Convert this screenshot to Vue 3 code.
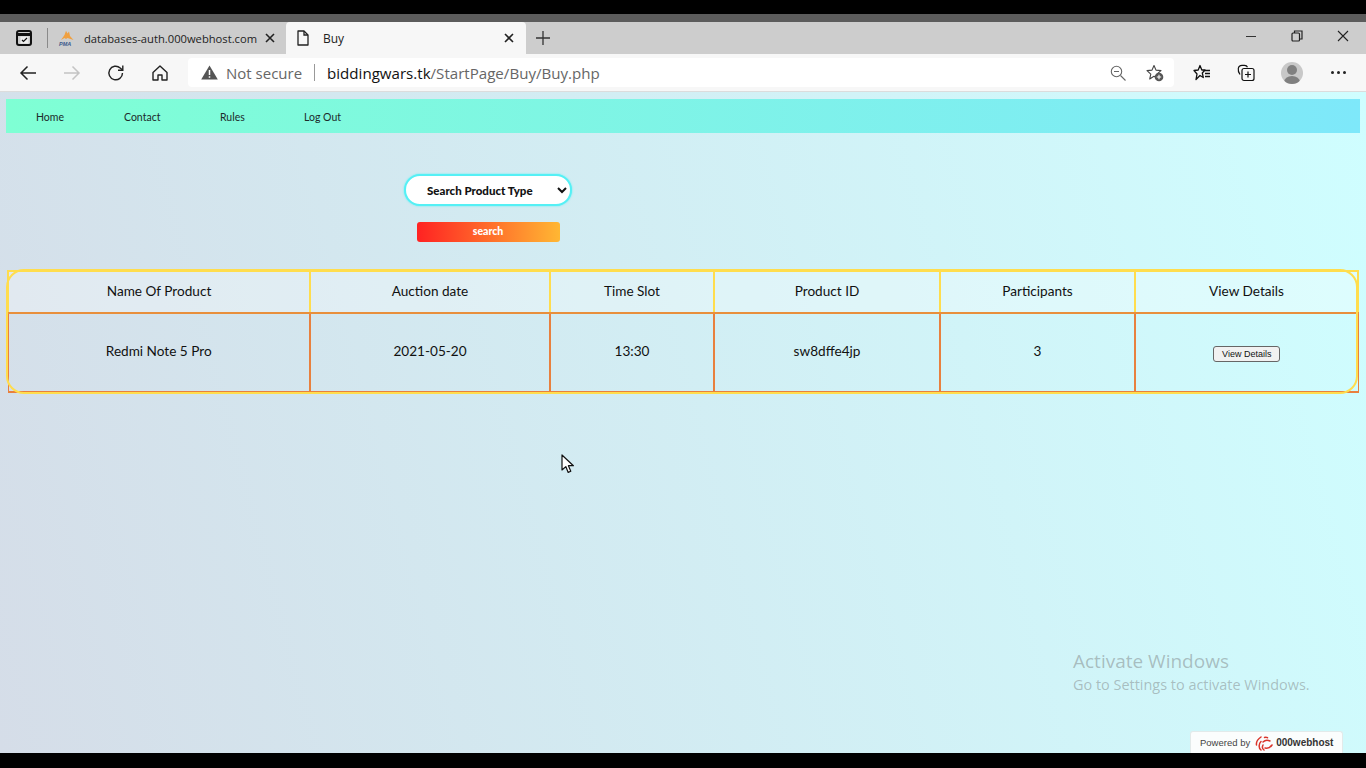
<template>
  <div class="screen">
    <div class="black-top"></div>
    <div class="tabstrip">
      <svg class="tab-actions" width="18" height="18" viewBox="0 0 18 18" fill="none" stroke="#111" stroke-width="2">
        <rect x="2" y="2" width="14" height="14" rx="2" />
        <path d="M2 5.500h14" stroke-width="3" />
        <rect x="5.500" y="7.500" width="8" height="7" fill="#eee" stroke="none" />
        <path d="M7 11l1.500 1.500L12 9" stroke-width="1.200" />
      </svg>
      <span class="tab-sep"></span>
      <div class="tab">
        <svg class="pma" width="18" height="16" viewBox="0 0 18 16">
          <path d="M3 10L6.500 5 8 .8 9.500 3.500 11 1.500 12 6l3.500 4-6-2-1.500 1-1.500-1z" fill="#f0a040" />
          <text x="1" y="15.500" font-size="5.500" font-weight="700" font-style="italic" fill="#3a5a8c" font-family="Liberation Sans, sans-serif">PMA</text>
        </svg>
        <span class="tab-title fade">databases-auth.000webhost.com</span>
        <svg class="tab-close" width="10" height="10" viewBox="0 0 10 10" stroke="#222" stroke-width="1.600"><path d="M1 1l8 8M9 1l-8 8" /></svg>
      </div>
      <div class="tab active">
        <svg class="doc" width="14" height="16" viewBox="0 0 14 16" fill="none" stroke="#222" stroke-width="1.300">
          <path d="M2 1h6l4 4v10H2z" stroke-linejoin="round" />
          <path d="M8 1v4h4" />
        </svg>
        <span class="tab-title">Buy</span>
        <svg class="tab-close" width="10" height="10" viewBox="0 0 10 10" stroke="#222" stroke-width="1.600"><path d="M1 1l8 8M9 1l-8 8" /></svg>
      </div>
      <svg class="new-tab" width="16" height="16" viewBox="0 0 16 16" stroke="#333" stroke-width="1.300"><path d="M8 1v14M1 8h14" /></svg>
      <div class="win-controls">
        <svg width="12" height="12" viewBox="0 0 12 12" stroke="#333"><path d="M1 6.500h10" /></svg>
        <svg width="12" height="12" viewBox="0 0 12 12" fill="none" stroke="#222" stroke-width="1.200">
          <rect x="1" y="3" width="7.500" height="8" rx="1" />
          <path d="M3.500 3V1h7.500v8H8.500" />
        </svg>
        <svg width="12" height="12" viewBox="0 0 12 12" stroke="#222" stroke-width="1.100"><path d="M1 1l10 10M11 1L1 11" /></svg>
      </div>
    </div>

    <div class="toolbar">
      <svg class="nav-icon back" width="18" height="16" viewBox="0 0 18 16" fill="none" stroke="#222" stroke-width="1.500"><path d="M17 8H2M8.500 1.500L2 8l6.500 6.500" /></svg>
      <svg class="nav-icon forward" width="18" height="16" viewBox="0 0 18 16" fill="none" stroke="#c4c4c4" stroke-width="1.500"><path d="M1 8h15M9.500 1.500L16 8l-6.500 6.500" /></svg>
      <svg class="nav-icon reload" width="18" height="18" viewBox="0 0 18 18" fill="none" stroke="#222" stroke-width="1.400">
        <path d="M15.500 9a6.800 6.800 0 1 1-2.300-5.100L15.500 6" />
        <path d="M15.800 1.500V6.200H11" />
      </svg>
      <svg class="nav-icon home" width="18" height="18" viewBox="0 0 18 18" fill="none" stroke="#222" stroke-width="1.400" stroke-linejoin="round">
        <path d="M2 8.500L9 2l7 6.500V16h-5v-5H7v5H2z" />
      </svg>
      <div class="address">
        <svg width="17" height="15" viewBox="0 0 17 15"><path d="M8.500 0.500L16.800 14.500H0.200z" fill="#555" /><path d="M8.500 5v5M8.500 11.200v1.500" stroke="#fff" stroke-width="1.500" /></svg>
        <span class="not-secure">Not secure</span>
        <span class="addr-sep"></span>
        <span class="url"><b>biddingwars.tk</b>/StartPage/Buy/Buy.php</span>
        <svg class="zoom-out" width="16" height="16" viewBox="0 0 16 16" fill="none" stroke="#666" stroke-width="1.100">
          <circle cx="6.500" cy="6.500" r="5.200" />
          <path d="M4 6.500h5M10.500 10.500l5 5" />
        </svg>
        <svg class="fav-add" width="18" height="18" viewBox="0 0 18 18">
          <path d="M8 1.500l2 4.600 5 .5-3.800 3.300 1.100 4.900L8 12.300 3.700 15l1.100-4.900L1 6.600l5-.5z" fill="none" stroke="#444" stroke-width="1.100" stroke-linejoin="round" />
          <circle cx="13" cy="13" r="4.300" fill="#555" />
          <path d="M13 10.800v4.400M10.800 13h4.400" stroke="#fff" stroke-width="1.100" />
        </svg>
      </div>
      <svg class="tool-icon fav" width="18" height="18" viewBox="0 0 18 18" fill="none" stroke="#111" stroke-width="1.300" stroke-linejoin="round">
        <path d="M7 1.500L8.800 6H12L9.300 9l1 4.500L7 11.500 3 15.500l1-5.500L1 6.500 5.200 6z" />
        <path d="M11.500 6.500H17M12 9.500h5M12 12.500h5" />
      </svg>
      <svg class="tool-icon coll" width="18" height="18" viewBox="0 0 18 18" fill="none" stroke="#111" stroke-width="1.200">
        <path d="M3 10.500C1.500 8.500 1 6.500 1.300 4.500 1.600 2.500 3 1.300 5 1.300h2.500c1.500 0 2.500.7 3 2" />
        <rect x="5" y="4.500" width="12" height="12" rx="2" />
        <path d="M11 7.500v6M8 10.500h6" />
      </svg>
      <div class="avatar">
        <span class="avatar-head"></span>
        <span class="avatar-body"></span>
      </div>
      <div class="more"><i></i><i></i><i></i></div>
    </div>

    <div class="page">
      <nav class="nav">
        <a v-for="link in links" :key="link" class="nav-link">{{ link }}</a>
      </nav>

      <form class="search" @submit.prevent>
        <select class="search-select">
          <option>Search Product Type</option>
        </select>
        <button class="search-btn" type="button">search</button>
      </form>

      <div class="table-wrap">
        <table class="products">
          <colgroup>
            <col v-for="w in colWidths" :key="w" :style="{ width: w + 'px' }" />
          </colgroup>
          <thead>
            <tr>
              <th v-for="h in headers" :key="h">{{ h }}</th>
            </tr>
          </thead>
          <tbody>
            <tr>
              <td v-for="c in row" :key="c" class="text-cell">{{ c }}</td>
              <td><button class="details-btn" type="button">View Details</button></td>
            </tr>
          </tbody>
        </table>
      </div>

      <svg class="cursor" width="14" height="20" viewBox="0 0 14 20">
        <path d="M1 1v15l3.800-3.400 2.400 5.800 2.600-1.100-2.400-5.600h5z" fill="#fff" stroke="#111" stroke-width="1.200" stroke-linejoin="round" />
      </svg>

      <div class="activate">
        <div class="activate-title">Activate Windows</div>
        <div class="activate-sub">Go to Settings to activate Windows.</div>
      </div>

      <div class="powered">
        <span class="powered-by">Powered by</span>
        <svg width="18" height="16" viewBox="0 0 18 16" fill="none" stroke="#d9352b" stroke-width="1.500" stroke-linecap="round">
          <path d="M6 2C3 4 1 7 1.500 10" />
          <path d="M6 15C3.500 13 3.500 9 6 6.500" />
          <path d="M9 15c-1.500-1-2-3-1-5" />
          <path d="M8 7c2-2 5-2 7-1" />
          <path d="M9.500 2.500c1-.5 2-.5 3 .2" />
          <path d="M10 13c3 .5 5.500-.5 7-3" />
        </svg>
        <span class="powered-name">000webhost</span>
      </div>
    </div>
    <div class="black-bottom"></div>
  </div>
</template>

<script setup>
const links = ['Home', 'Contact', 'Rules', 'Log Out']
const colWidths = [302, 240, 164, 226, 195, 223]
const headers = ['Name Of Product', 'Auction date', 'Time Slot', 'Product ID', 'Participants', 'View Details']
const row = ['Redmi Note 5 Pro', '2021-05-20', '13:30', 'sw8dffe4jp', '3']
</script>

<style>
html, body {
  margin: 0;
  background: #000;
  overflow: hidden;
}
</style>

<style scoped>
.screen {
  width: 1366px;
  height: 768px;
  display: flex;
  flex-direction: column;
  overflow: hidden;
  font-family: "Lato", "Liberation Sans", sans-serif;
}
.black-top {
  height: 14px;
  background: #000;
}
.black-bottom {
  height: 15px;
  background: #000;
}
.tabstrip {
  height: 40px;
  box-sizing: border-box;
  padding-top: 8px;
  display: flex;
  align-items: center;
  background: linear-gradient(#5c5c5c 8px, #cdcdcd 8px);
  font-family: "Open Sans", sans-serif;
}
.tab-actions {
  margin-left: 15px;
  flex: none;
}
.tab-sep {
  width: 1px;
  height: 20px;
  margin-left: 14px;
  background: #8a8a8a;
}
.tab {
  height: 32px;
  width: 237px;
  box-sizing: border-box;
  display: flex;
  align-items: center;
  padding: 0 10px;
  font-size: 12px;
  color: #222;
}
.tab.active {
  width: 240px;
  margin-left: 1px;
  padding: 0 12px;
  background: #f7f7f7;
  border-radius: 4px 4px 0 0;
}
.pma {
  flex: none;
}
.tab-title {
  flex: 1;
  min-width: 0;
  margin-left: 8px;
  white-space: nowrap;
}
.tab-title.fade {
  font-size: 11.200px;
}
.tab-close {
  flex: none;
  margin-left: 9px;
}
.tab.active .doc {
  margin-left: -2px;
}
.tab.active .tab-title {
  margin-left: 13px;
}
.new-tab {
  margin-left: 9px;
}
.win-controls {
  margin-left: auto;
  display: flex;
  gap: 34px;
  padding-right: 17px;
  padding-bottom: 4px;
}
.toolbar {
  height: 38px;
  box-sizing: border-box;
  border-bottom: 1px solid #dcdcdc;
  display: flex;
  align-items: center;
  background: #f7f7f7;
}
.nav-icon, .tool-icon {
  flex: none;
}
.back {
  margin-left: 19px;
}
.forward {
  margin-left: 26px;
}
.reload {
  margin-left: 26px;
}
.home {
  margin-left: 26px;
}
.address {
  width: 986px;
  height: 29px;
  margin-left: 19px;
  box-sizing: border-box;
  padding: 0 10px 0 13px;
  display: flex;
  align-items: center;
  background: #fff;
  border-radius: 4px;
  font-family: "Open Sans", sans-serif;
}
.not-secure {
  margin-left: 8px;
  font-size: 15px;
  color: #666;
}
.addr-sep {
  width: 1px;
  height: 17px;
  margin: 0 12px;
  background: #999;
}
.url {
  font-size: 15.100px;
  color: #666;
}
.url b {
  font-weight: 400;
  color: #111;
}
.zoom-out {
  margin-left: auto;
}
.fav-add {
  margin-left: 20px;
}
.fav {
  margin-left: 19px;
}
.coll {
  margin-left: 26px;
}
.avatar {
  width: 22px;
  height: 22px;
  margin-left: 26px;
  position: relative;
  overflow: hidden;
  border-radius: 50%;
  background: #c8c8c8;
}
.avatar-head {
  position: absolute;
  left: 6px;
  top: 3px;
  width: 10px;
  height: 10px;
  border-radius: 50%;
  background: #808080;
}
.avatar-body {
  position: absolute;
  left: 3px;
  top: 14px;
  width: 16px;
  height: 12px;
  border-radius: 50%;
  background: #808080;
}
.more {
  display: flex;
  gap: 3px;
  margin-left: 28px;
}
.more i {
  width: 3px;
  height: 3px;
  border-radius: 50%;
  background: #222;
}
.page {
  flex: 1;
  position: relative;
  min-height: 0;
  padding: 7px 6px 0;
  background: linear-gradient(75deg, #d5dde8, #cffeff);
}
.nav {
  height: 34px;
  display: flex;
  align-items: center;
  padding-left: 30px;
  background: linear-gradient(to right, #7fffd4, #7ee8fa);
  font-size: 10.500px;
  color: #1c2b2b;
}
.nav-link {
  padding-top: 1px;
}
.nav-link:nth-child(1) {
  width: 88px;
}
.nav-link:nth-child(2) {
  width: 96px;
}
.nav-link:nth-child(3) {
  width: 84px;
}
.search {
  width: 168px;
  margin: 41px 0 0 398px;
  display: flex;
  flex-direction: column;
  align-items: center;
}
.search-select {
  width: 168px;
  height: 32px;
  box-sizing: border-box;
  border: 2px solid #55f0f5;
  border-radius: 16px;
  box-shadow: 0 0 2px #55f0f5;
  background: #fff;
  outline: none;
  padding: 0 0 0 17px;
  font-family: "Lato", sans-serif;
  font-size: 11.500px;
  font-weight: 900;
  color: #111;
}
.search-btn {
  width: 143px;
  height: 20px;
  margin-top: 16px;
  padding: 0 0 2px;
  border: none;
  border-radius: 3px;
  background: linear-gradient(to right, #ff2222, #ffb733);
  color: #fff;
  font-family: "Lato", sans-serif;
  font-size: 10.500px;
  font-weight: 900;
}
.table-wrap {
  position: relative;
  width: 1350px;
  margin: 28px 0 0 1px;
}
.table-wrap::after {
  content: "";
  position: absolute;
  inset: -1px;
  border: 2px solid #ffdd4d;
  border-radius: 18px;
  pointer-events: none;
}
.products {
  width: 1350px;
  table-layout: fixed;
  border-collapse: collapse;
  color: #111;
  font-size: 13.600px;
}
.products th {
  height: 38px;
  padding: 0 0 2px;
  font-weight: 400;
  background: rgba(255, 255, 255, 0.3);
  border: 2px solid #ffdd4d;
  border-bottom-color: #e88f3c;
}
.products td {
  height: 77px;
  padding: 0;
  text-align: center;
  border: 2px solid #e8803e;
}
.products td.text-cell {
  height: 73px;
  padding-bottom: 4px;
}
.products tr td:first-child {
  border-left-width: 1px;
}
.products tr td:last-child {
  border-right-width: 1px;
}
.details-btn {
  width: 67px;
  height: 16px;
  padding: 0;
  background: #f1f1f1;
  border: 1px solid #666;
  border-radius: 3px;
  font-family: "Liberation Sans", sans-serif;
  font-size: 9px;
  color: #111;
}
.cursor {
  position: absolute;
  left: 561px;
  top: 362px;
}
.activate {
  position: absolute;
  left: 1073px;
  top: 557px;
  color: rgba(110, 110, 110, 0.42);
  font-family: "Open Sans", sans-serif;
}
.activate-title {
  font-size: 19px;
  line-height: 25px;
}
.activate-sub {
  font-size: 14.450px;
  line-height: 21px;
}
.powered {
  position: absolute;
  right: 23px;
  bottom: 0;
  width: 153px;
  height: 22px;
  box-sizing: border-box;
  padding-left: 9px;
  display: flex;
  align-items: center;
  background: #fbfdfd;
  border: 1px solid #e2eaea;
  border-bottom: none;
  border-radius: 3px 3px 0 0;
  font-family: "Liberation Sans", sans-serif;
}
.powered-by {
  font-size: 9.500px;
  color: #444;
  margin-right: 5px;
}
.powered-name {
  margin-left: 3px;
  font-size: 10px;
  font-weight: 700;
  color: #333;
}
</style>
